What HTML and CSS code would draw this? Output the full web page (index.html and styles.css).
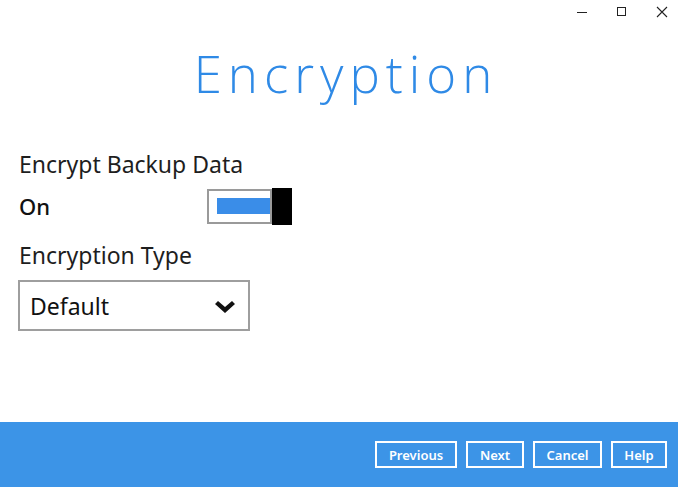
FILE: index.html
```html
<!DOCTYPE html>
<html>
<head>
<meta charset="utf-8">
<link rel="stylesheet" href="styles.css">
</head>
<body>
<div class="window">
  <div class="titlebar">
    <span class="ctl"><svg width="12" height="12" viewBox="0 0 12 12"><path d="M1 6.5h10" stroke="#222" stroke-width="1"/></svg></span>
    <span class="ctl"><svg width="12" height="12" viewBox="0 0 12 12"><rect x="1.5" y="1.5" width="8" height="8" fill="none" stroke="#222" stroke-width="1"/></svg></span>
    <span class="ctl"><svg width="12" height="12" viewBox="0 0 12 12"><path d="M1 1L11 11M11 1L1 11" stroke="#222" stroke-width="1.1"/></svg></span>
  </div>
  <h1 class="title">Encryption</h1>
  <div class="content">
    <div class="label">Encrypt Backup Data</div>
    <div class="row">
      <span class="state">On</span>
      <span class="toggle"><span class="track"><span class="fill"></span></span><span class="knob"></span></span>
    </div>
    <div class="label label2">Encryption Type</div>
    <div class="select">
      <span>Default</span>
      <svg width="20" height="12" viewBox="0 0 20 12"><polygon points="0,3 3,0 10,6 17,0 20,3 10,12" fill="#111"/></svg>
    </div>
  </div>
  <div class="footer">
    <button class="btn w82">Previous</button>
    <button class="btn w58">Next</button>
    <button class="btn w69">Cancel</button>
    <button class="btn w56">Help</button>
  </div>
</div>
</body>
</html>
```
FILE: styles.css
```css
html, body {
  margin: 0;
  padding: 0;
  background: #fff;
}
.window {
  width: 678px;
  height: 487px;
  display: flex;
  flex-direction: column;
  font-family: "Noto Sans", "Open Sans", sans-serif;
}
.titlebar {
  height: 24px;
  display: flex;
  justify-content: flex-end;
  align-items: center;
  gap: 28px;
  padding-right: 10px;
}
.ctl {
  width: 12px;
  height: 12px;
  display: flex;
}
.title {
  margin: 14px 0 0 0;
  padding-left: 14px;
  text-align: center;
  font-family: "Open Sans", sans-serif;
  font-weight: 300;
  font-size: 51px;
  letter-spacing: 6px;
  line-height: 70px;
  color: #2f8ae6;
  height: 70px;
}
.content {
  flex: 1;
  padding: 42px 0 0 19px;
}
.label {
  font-size: 23px;
  line-height: 28px;
  color: #1e1e1e;
}
.row {
  display: flex;
  align-items: center;
  height: 42px;
  margin-top: 7px;
}
.state {
  font-size: 22px;
  font-weight: 500;
  color: #111;
  width: 188px;
}
.toggle {
  display: flex;
  align-items: center;
}
.track {
  width: 65px;
  height: 35px;
  border: 2px solid #9a9a9a;
  display: flex;
  align-items: center;
  padding-left: 8px;
  box-sizing: border-box;
}
.fill {
  width: 55px;
  height: 16px;
  background: #3a8de8;
}
.knob {
  width: 20px;
  height: 37px;
  background: #000;
}
.label2 {
  margin-top: 14px;
}
.select {
  margin-top: 11px;
  margin-left: -1px;
  width: 232px;
  height: 51px;
  box-sizing: border-box;
  border: 2px solid #9e9e9e;
  display: flex;
  align-items: center;
  justify-content: space-between;
  padding: 0 13px 0 10px;
  font-size: 23px;
  color: #111;
}
.select svg { margin-top: 2px; }
.footer {
  height: 65px;
  background: #3c94e7;
  display: flex;
  justify-content: flex-end;
  align-items: center;
  gap: 9px;
  padding-right: 11px;
}
.btn {
  height: 27px;
  border: 2px solid #fff;
  background: transparent;
  color: #fff;
  font-family: "Noto Sans", "Open Sans", sans-serif;
  font-weight: 600;
  font-size: 13px;
  padding: 0;
}
.w82 { width: 82px; }
.w58 { width: 58px; }
.w69 { width: 69px; }
.w56 { width: 56px; }
```
